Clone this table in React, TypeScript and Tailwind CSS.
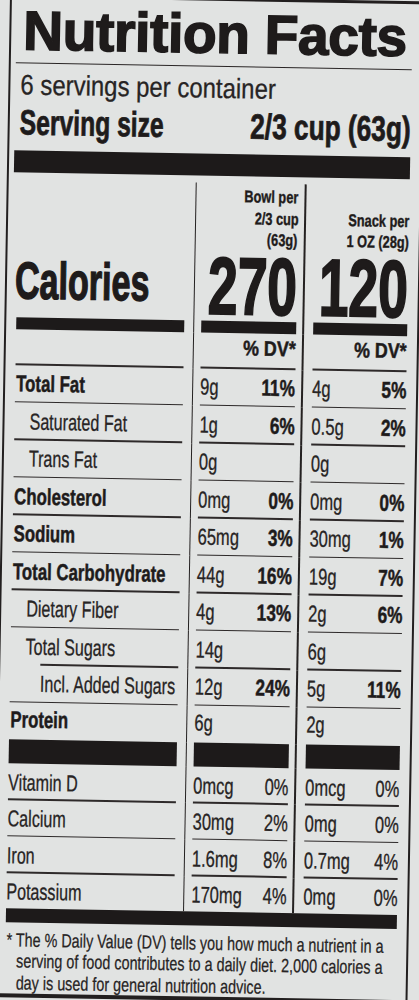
import React from "react";

const SEP = "w-[1.6px] shrink-0 bg-[#242121]";
const LINE = "h-[1.3px] shrink-0 bg-[#2e2a2a]";
const BAR = "bg-[#1d1a1a]";

const LB =
  "inline-block whitespace-nowrap origin-left scale-x-[0.73] font-bold [-webkit-text-stroke:0.5px_#1e1b1b]";
const LR =
  "inline-block whitespace-nowrap origin-left scale-x-[0.70] text-[#272424] [-webkit-text-stroke:0.3px_#272424]";
const VR =
  "inline-block whitespace-nowrap origin-left scale-x-[0.72] text-[#272424] [-webkit-text-stroke:0.3px_#272424]";
const PB =
  "inline-block whitespace-nowrap origin-right scale-x-[0.75] font-bold [-webkit-text-stroke:0.5px_#1e1b1b]";
const PR =
  "inline-block whitespace-nowrap origin-right scale-x-[0.72] text-[#272424] [-webkit-text-stroke:0.3px_#272424]";
const HB =
  "inline-block origin-right scale-x-[0.75] [-webkit-text-stroke:0.4px_#1e1b1b]";
const FN =
  "inline-block origin-left scale-x-[0.756] leading-[21px] [-webkit-text-stroke:0.25px_#272424]";

function Cols({
  h,
  a,
  b,
  c,
}: {
  h: string;
  a: React.ReactNode;
  b: React.ReactNode;
  c: React.ReactNode;
}) {
  return (
    <div className={"flex " + h}>
      <div className="flex w-[168px] shrink-0 flex-col">{a}</div>
      <div className={"ml-[8.5px] mr-[7px] " + SEP} />
      <div className="flex w-[95px] shrink-0 flex-col">{b}</div>
      <div className={"ml-[6px] mr-[9.5px] " + SEP} />
      <div className="flex w-[94px] shrink-0 flex-col">{c}</div>
    </div>
  );
}

type Nut = {
  label: string;
  kind: "b" | "r1" | "r2";
  v1: string;
  p1?: string;
  v2: string;
  p2?: string;
  indentLine?: boolean;
};

const main: Nut[] = [
  { label: "Total Fat", kind: "b", v1: "9g", p1: "11%", v2: "4g", p2: "5%" },
  { label: "Saturated Fat", kind: "r1", v1: "1g", p1: "6%", v2: "0.5g", p2: "2%" },
  { label: "Trans Fat", kind: "r1", v1: "0g", v2: "0g" },
  { label: "Cholesterol", kind: "b", v1: "0mg", p1: "0%", v2: "0mg", p2: "0%" },
  { label: "Sodium", kind: "b", v1: "65mg", p1: "3%", v2: "30mg", p2: "1%" },
  { label: "Total Carbohydrate", kind: "b", v1: "44g", p1: "16%", v2: "19g", p2: "7%" },
  { label: "Dietary Fiber", kind: "r1", v1: "4g", p1: "13%", v2: "2g", p2: "6%" },
  { label: "Total Sugars", kind: "r1", v1: "14g", v2: "6g", indentLine: true },
  { label: "Incl. Added Sugars", kind: "r2", v1: "12g", p1: "24%", v2: "5g", p2: "11%" },
];

function MainLabel({ n }: { n: Nut }) {
  return (
    <>
      {n.kind === "b" && (
        <div className="flex-1 whitespace-nowrap pl-[1px] pt-[2.5px] text-[23px] leading-[33.7px]">
          <span className={LB}>{n.label}</span>
        </div>
      )}
      {n.kind === "r1" && (
        <div className="flex-1 whitespace-nowrap pl-[15px] pt-[2.5px] text-[23px] leading-[33.7px]">
          <span className={LR}>{n.label}</span>
        </div>
      )}
      {n.kind === "r2" && (
        <div className="flex-1 whitespace-nowrap pl-[29.5px] pt-[2.5px] text-[23px] leading-[33.7px]">
          <span className={LR}>{n.label}</span>
        </div>
      )}
      {n.indentLine ? <div className={"ml-[29.5px] " + LINE} /> : <div className={LINE} />}
    </>
  );
}

function MainVal({ v, p }: { v: string; p?: string }) {
  return (
    <>
      <div className="flex flex-1 items-start pt-[2.5px] text-[23px] leading-[33.7px]">
        <div className="min-w-0 flex-1 whitespace-nowrap">
          <span className={VR}>{v}</span>
        </div>
        {p && <span className={"shrink-0 " + PB}>{p}</span>}
      </div>
      <div className={LINE} />
    </>
  );
}

const vit = [
  { label: "Vitamin D", v1: "0mcg", p1: "0%", v2: "0mcg", p2: "0%", h: "h-[36px]", line: true },
  { label: "Calcium", v1: "30mg", p1: "2%", v2: "0mg", p2: "0%", h: "h-[37px]", line: true },
  { label: "Iron", v1: "1.6mg", p1: "8%", v2: "0.7mg", p2: "4%", h: "h-[36.5px]", line: true },
  { label: "Potassium", v1: "170mg", p1: "4%", v2: "0mg", p2: "0%", h: "h-[35.5px]", line: false },
];

function VitVal({ v, p, line }: { v: string; p: string; line: boolean }) {
  return (
    <>
      <div className="flex flex-1 items-start pt-[3.5px] text-[23px] leading-[31.7px]">
        <div className="min-w-0 flex-1 whitespace-nowrap">
          <span className={VR}>{v}</span>
        </div>
        <span className={"shrink-0 " + PR}>{p}</span>
      </div>
      {line && <div className={LINE} />}
    </>
  );
}

function BigNum({ n }: { n: string }) {
  return (
    <div className="mb-[4.4px] flex justify-end whitespace-nowrap text-[81px] font-bold leading-[62px]">
      <span className="inline-block origin-right scale-x-[0.66] [-webkit-text-stroke:2px_#1e1b1b]">
        {n}
      </span>
    </div>
  );
}

export default function App() {
  return (
    <div className="relative h-[1000px] w-[419px] overflow-hidden bg-[#e1e3e2] font-['Liberation_Sans',Arial,sans-serif] text-[#1e1b1b]">
      <div className="w-[440px] origin-top-left rotate-1">
        <div className="ml-[10px] mt-[-6px] w-[415px] border-x-2 border-b-4 border-t-[3px] border-[#221f1f] pl-[5px] pr-[10px]">
          {/* Title */}
          <div className="whitespace-nowrap pl-[7px] pt-[5.5px] text-[55px] font-bold leading-[55px] tracking-[-0.3px] [-webkit-text-stroke:1.6px_#1e1b1b]">
            Nutrition Facts
          </div>
          <div className="mt-[4px] h-[1.5px] bg-[#2a2626]" />

          <div className="mt-[8px] pl-[5px] text-[28px] leading-[28px] text-[#272424]">
            <span className="inline-block origin-left scale-x-[0.855] whitespace-nowrap [-webkit-text-stroke:0.3px_#272424]">
              6 servings per container
            </span>
          </div>

          <div className="mt-[5px] flex h-[35px] pl-[5px] text-[35px] font-bold leading-[35px]">
            <div className="min-w-0 flex-1 whitespace-nowrap">
              <span className="inline-block origin-left scale-x-[0.705] [-webkit-text-stroke:0.8px_#1e1b1b]">
                Serving size
              </span>
            </div>
            <span className="inline-block shrink-0 origin-right scale-x-[0.75] whitespace-nowrap [-webkit-text-stroke:0.8px_#1e1b1b]">
              2/3 cup (63g)
            </span>
          </div>

          <div className={"mt-[11.1px] h-[22px] " + BAR} />

          {/* Table */}
          <div className="ml-[5px] mt-[7px]">
            <Cols
              h="h-[149.5px]"
              a={
                <div className="flex flex-1 flex-col justify-end">
                  <div className="-ml-[2px] mb-[11.4px] whitespace-nowrap text-[52px] font-bold leading-[52px]">
                    <span className="inline-block origin-left scale-x-[0.655] [-webkit-text-stroke:1.4px_#1e1b1b]">
                      Calories
                    </span>
                  </div>
                  <div className={"h-[11.5px] " + BAR} />
                </div>
              }
              b={
                <div className="flex flex-1 flex-col justify-end">
                  <div className="mb-[4.2px] text-[17px] font-bold leading-[21.5px]">
                    <div className="flex justify-end whitespace-nowrap">
                      <span className={HB}>Bowl per</span>
                    </div>
                    <div className="flex justify-end whitespace-nowrap">
                      <span className={HB}>2/3 cup</span>
                    </div>
                    <div className="flex justify-end whitespace-nowrap">
                      <span className={HB}>(63g)</span>
                    </div>
                  </div>
                  <BigNum n="270" />
                  <div className={"h-[11.5px] " + BAR} />
                </div>
              }
              c={
                <div className="flex flex-1 flex-col justify-end">
                  <div className="mb-[4.2px] text-[17px] font-bold leading-[21.5px]">
                    <div className="flex justify-end whitespace-nowrap">
                      <span className={HB}>Snack per</span>
                    </div>
                    <div className="flex justify-end whitespace-nowrap">
                      <span className={HB}>1 OZ (28g)</span>
                    </div>
                  </div>
                  <BigNum n="120" />
                  <div className={"h-[11.5px] " + BAR} />
                </div>
              }
            />

            <Cols
              h="h-[36px]"
              a={
                <>
                  <div className="flex-1" />
                  <div className={LINE} />
                </>
              }
              b={
                <>
                  <div className="flex flex-1 items-start justify-end pt-[3px] text-[21px] font-bold leading-[23.5px]">
                    <span className="inline-block origin-right scale-x-[0.85] whitespace-nowrap [-webkit-text-stroke:0.5px_#1e1b1b]">
                      % DV*
                    </span>
                  </div>
                  <div className={LINE} />
                </>
              }
              c={
                <>
                  <div className="flex flex-1 items-start justify-end pt-[3px] text-[21px] font-bold leading-[23.5px]">
                    <span className="inline-block origin-right scale-x-[0.85] whitespace-nowrap [-webkit-text-stroke:0.5px_#1e1b1b]">
                      % DV*
                    </span>
                  </div>
                  <div className={LINE} />
                </>
              }
            />

            {main.map((n) => (
              <Cols
                key={n.label}
                h="h-[37.5px]"
                a={<MainLabel n={n} />}
                b={<MainVal v={n.v1} p={n.p1} />}
                c={<MainVal v={n.v2} p={n.p2} />}
              />
            ))}

            <Cols
              h="h-[37px]"
              a={
                <div className="whitespace-nowrap pl-[1px] pt-[0.5px] text-[23px] leading-[33.7px]">
                  <span className={LB}>Protein</span>
                </div>
              }
              b={
                <div className="whitespace-nowrap pt-[0.5px] text-[23px] leading-[33.7px]">
                  <span className={VR}>6g</span>
                </div>
              }
              c={
                <div className="whitespace-nowrap pt-[0.5px] text-[23px] leading-[33.7px]">
                  <span className={VR}>2g</span>
                </div>
              }
            />

            <Cols
              h="h-[24px]"
              a={<div className={"flex-1 " + BAR} />}
              b={<div className={"flex-1 " + BAR} />}
              c={<div className={"flex-1 " + BAR} />}
            />

            {vit.map((r) => (
              <Cols
                key={r.label}
                h={r.h}
                a={
                  <>
                    <div className="flex-1 whitespace-nowrap pt-[3.5px] text-[23px] leading-[31.7px]">
                      <span className={LR}>{r.label}</span>
                    </div>
                    {r.line && <div className={LINE} />}
                  </>
                }
                b={<VitVal v={r.v1} p={r.p1} line={r.line} />}
                c={<VitVal v={r.v2} p={r.p2} line={r.line} />}
              />
            ))}

            <div className={"h-[14px] " + BAR} />
          </div>

          {/* Footnote */}
          <div className="mt-[6.5px] text-[19px] leading-[21.5px] text-[#272424]">
            <div className="whitespace-nowrap pl-[6px]">
              <span className={FN}>* The % Daily Value (DV) tells you how much a nutrient in a</span>
            </div>
            <div className="whitespace-nowrap pl-[15.5px]">
              <span className={FN}>serving of food contributes to a daily diet. 2,000 calories a</span>
            </div>
            <div className="whitespace-nowrap pl-[15.5px]">
              <span className={FN}>day is used for general nutrition advice.</span>
            </div>
          </div>
        </div>
      </div>
    </div>
  );
}
